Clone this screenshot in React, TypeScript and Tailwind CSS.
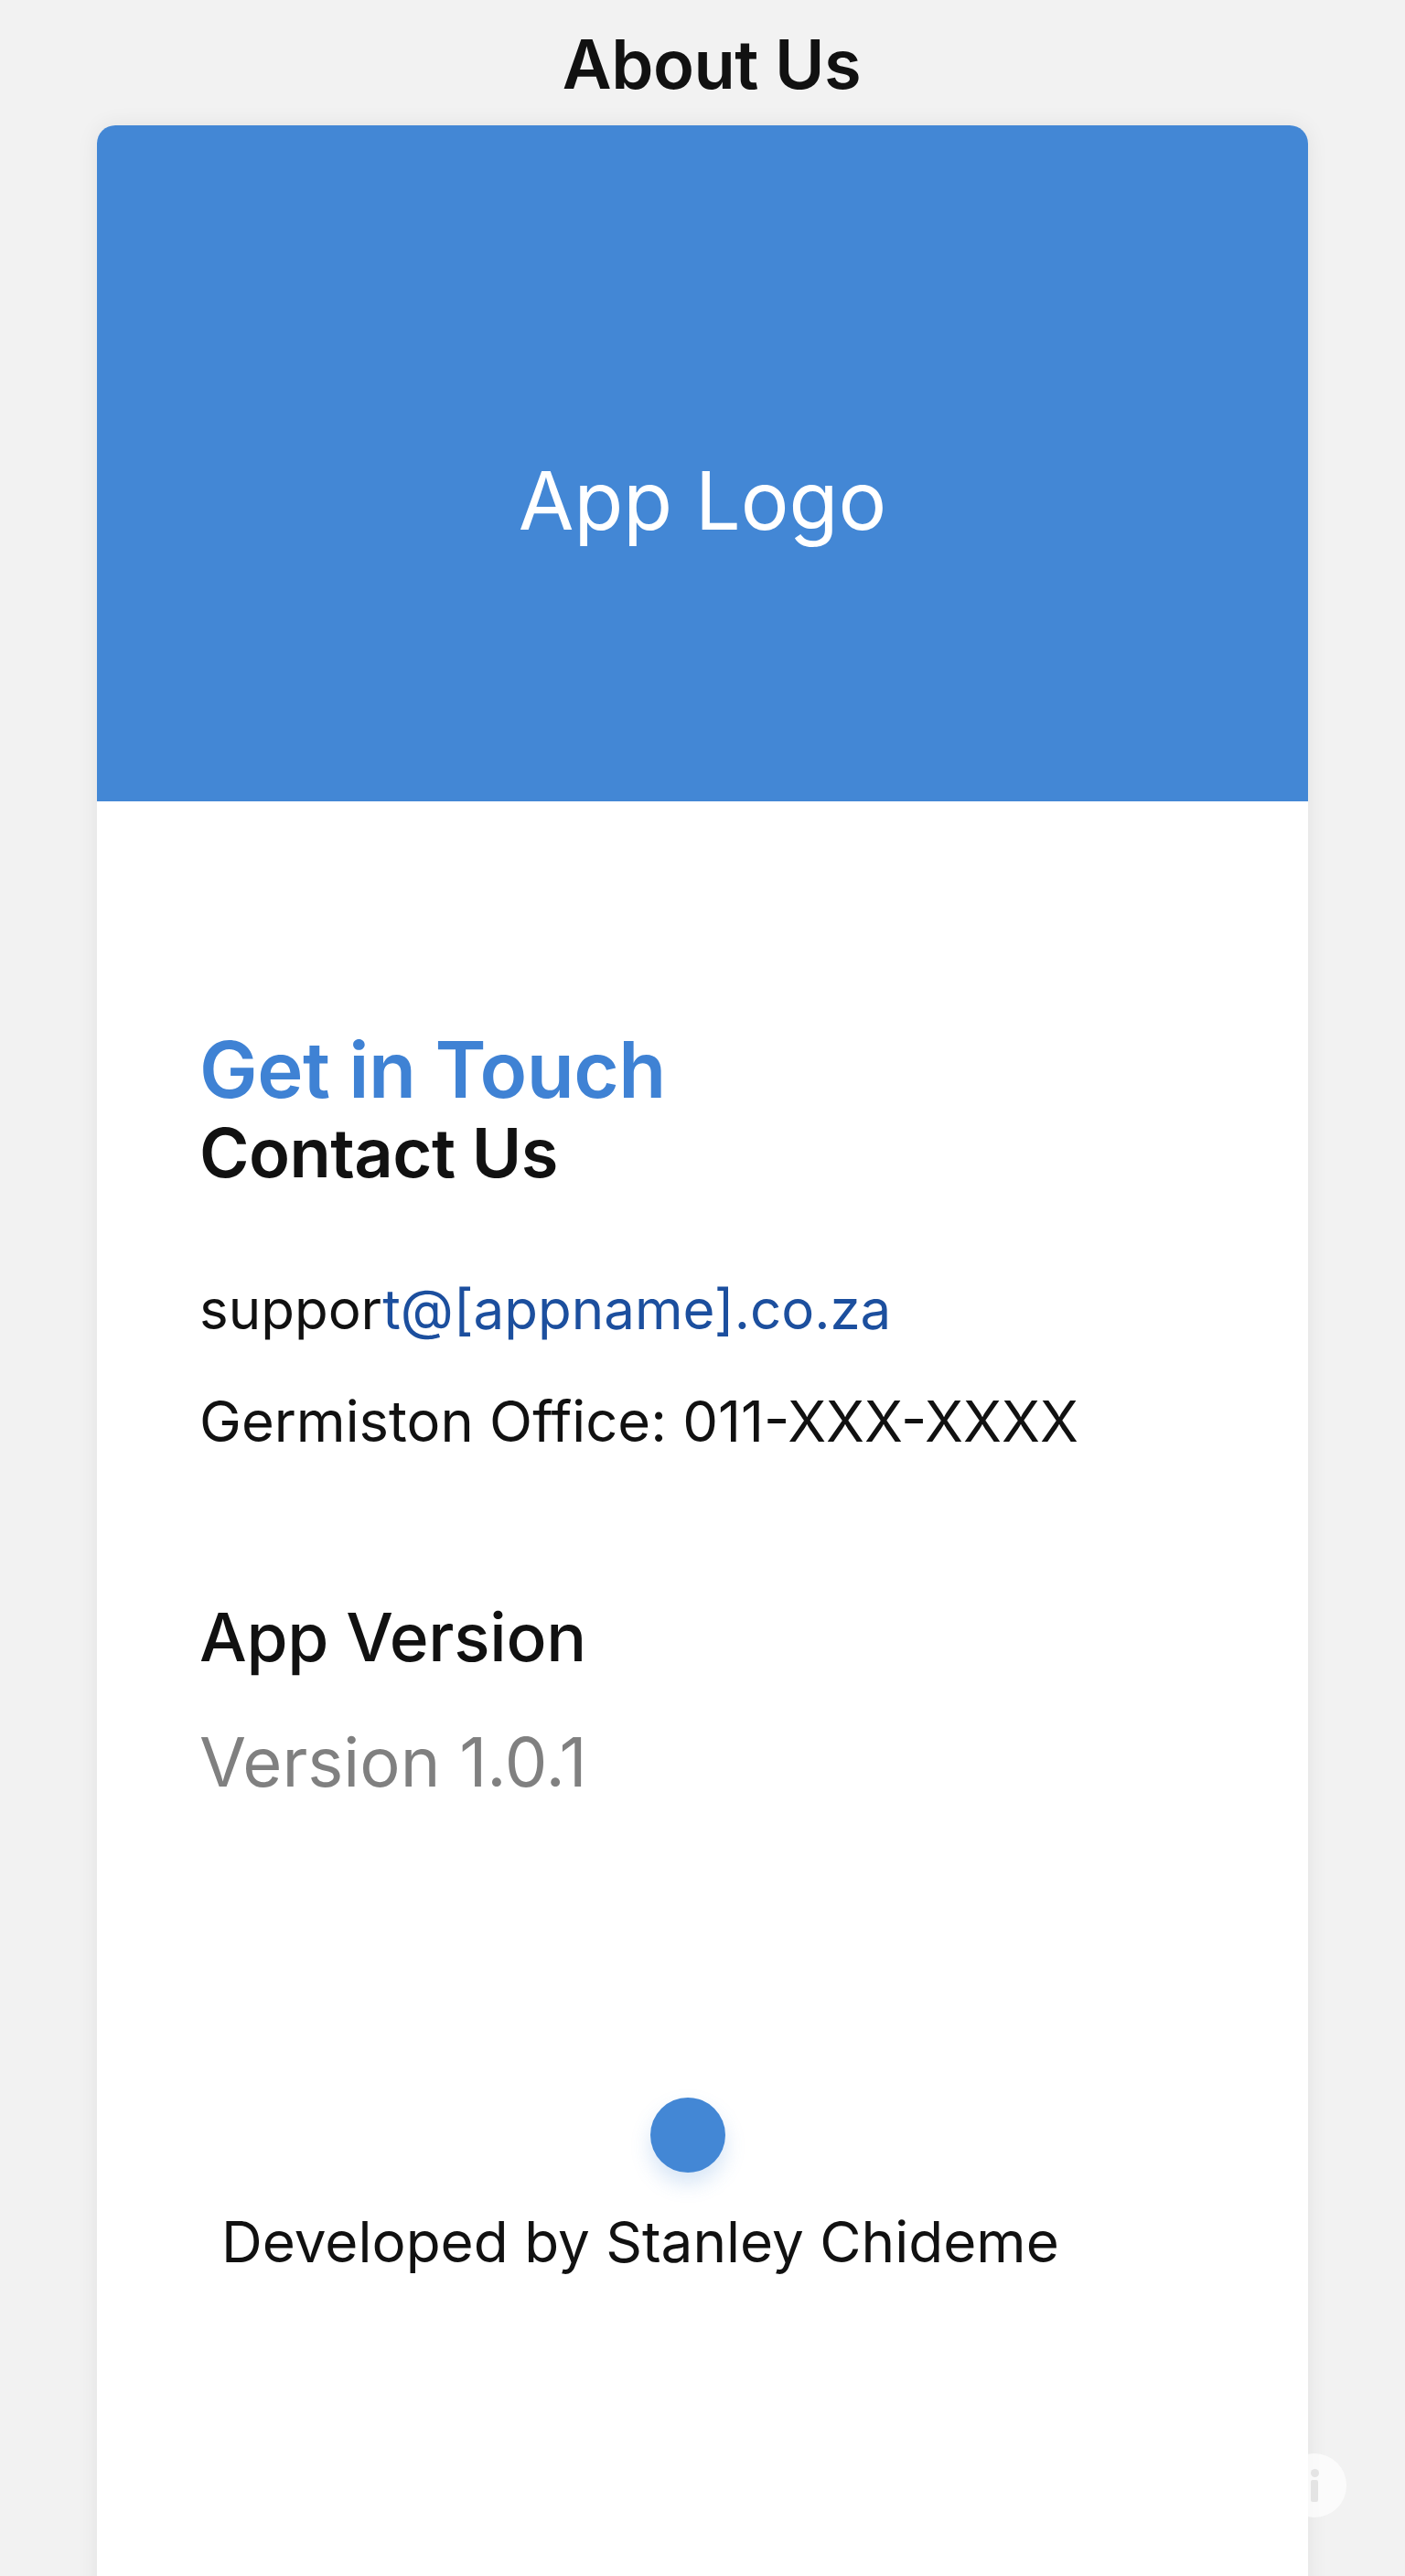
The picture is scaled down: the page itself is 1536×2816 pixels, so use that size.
import React from 'react';

const InfoBadge: React.FC = () => (
  <div className="absolute left-[1402px] top-[2682px] w-[70px] h-[70px] rounded-full bg-white/70 flex flex-col items-center justify-center gap-[3px]">
    <div className="w-[9px] h-[9px] rounded-full bg-[#e4e4e4]" />
    <div className="w-[8px] h-[24px] rounded-[2px] bg-[#e4e4e4]" />
  </div>
);

export default function App() {
  return (
    <div className="relative min-h-screen bg-[#f2f2f2] font-['Inter','Liberation_Sans',sans-serif] text-[#111111]">
      <h1 className="pt-[33px] pl-[20px] text-center text-[74px] leading-none font-semibold tracking-[-0.5px]">
        About Us
      </h1>

      <div className="mx-[106px] mt-[30px] rounded-t-[20px] bg-white shadow-[0_0_24px_rgba(0,0,0,0.07)]">
        <div className="h-[739px] rounded-t-[20px] bg-[#4387d5] pt-[80px] flex items-center justify-center">
          <span className="text-[88px] leading-none font-normal text-white">App Logo</span>
        </div>

        <div className="pl-[112px] pt-[251px] pb-[360px] flex flex-col items-start">
          <h2 className="text-[85px] leading-none font-semibold text-[#3f82d4] tracking-[-0.5px]">
            Get in Touch
          </h2>
          <h3 className="mt-[11px] text-[74px] leading-none font-semibold tracking-[-0.5px]">
            Contact Us
          </h3>

          <p className="mt-[104px] text-[60px] leading-none">
            suppor<span className="text-[#1c4f9e]">t@[appname].co.za</span>
          </p>
          <p className="mt-[62px] text-[61.5px] leading-none">Germiston Office: 011-XXX-XXXX</p>

          <h3 className="mt-[168px] text-[73px] leading-none font-medium tracking-[-0.3px]">
            App Version
          </h3>
          <p className="mt-[63px] text-[74px] leading-none text-[#808080]">Version 1.0.1</p>

          <div className="mt-[330px] ml-[493px] w-[82px] h-[82px] rounded-full bg-[#4387d5] shadow-[0_12px_22px_rgba(67,135,213,0.22)]" />

          <p className="mt-[45px] ml-[24px] text-[62px] leading-none">Developed by Stanley Chideme</p>
        </div>
      </div>

      <InfoBadge />
    </div>
  );
}
